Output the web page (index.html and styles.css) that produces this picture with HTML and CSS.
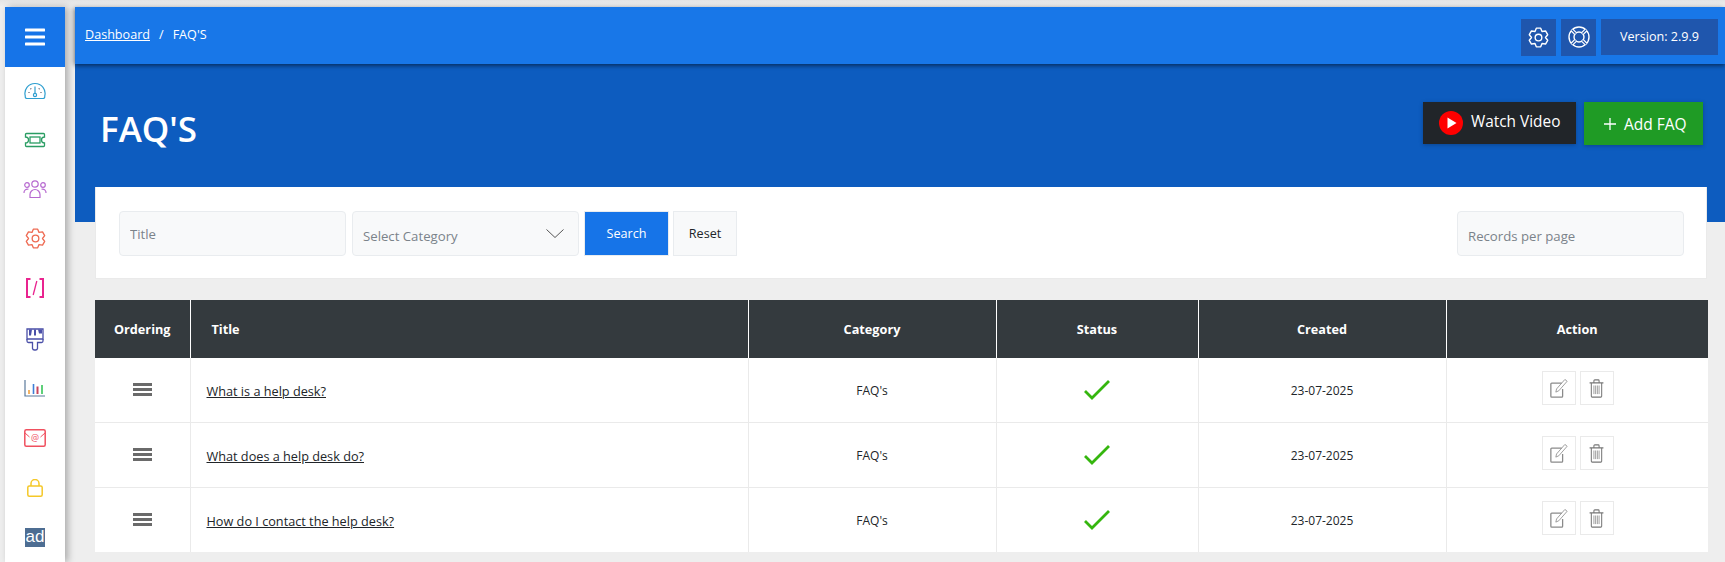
FILE: index.html
```html
<!DOCTYPE html>
<html lang="en">
<head>
<meta charset="utf-8">
<title>FAQ'S</title>
<link rel="stylesheet" href="styles.css">
</head>
<body>
<div class="shell">
  <aside class="sidebar">
    <div class="menu-toggle">
      <svg width="20" height="18" viewBox="0 0 20 18"><path d="M1 2h18M1 9h18M1 16h18" stroke="#fff" stroke-width="3" stroke-linecap="round"/></svg>
    </div>
    <nav class="side-nav">
      <a class="side-item"><svg width="22" height="18" viewBox="0 0 22 18" fill="none" stroke="#2f9fd0" stroke-width="1.2"><path d="M3 16.500h16a1.800 1.800 0 0 0 1.700-2.300A10 10 0 0 0 11 1.500 10 10 0 0 0 1.300 14.200 1.800 1.800 0 0 0 3 16.500z"/><circle cx="11" cy="13" r="1.600"/><path d="M11 11V4.500"/><path stroke="#445" d="M4.500 10.500h1M6.500 6.500l.7.7M15.500 6.500l-.7.7M16.500 10.500h1"/></svg></a>
      <a class="side-item"><svg width="22" height="16" viewBox="0 0 22 16" fill="none" stroke="#2a9d63" stroke-width="1.300"><path d="M2.500 1.500h17a1 1 0 0 1 1 1V5a3 3 0 0 0 0 6v2.500a1 1 0 0 1-1 1h-17a1 1 0 0 1-1-1V11a3 3 0 0 0 0-6V2.500a1 1 0 0 1 1-1z"/><rect x="6" y="5" width="10" height="6"/></svg></a>
      <a class="side-item nudge-2"><svg width="24" height="20" viewBox="0 0 24 20" fill="none" stroke="#b76ad0" stroke-width="1.200"><circle cx="12" cy="5" r="3.200"/><circle cx="4" cy="6" r="2.300"/><circle cx="20" cy="6" r="2.300"/><path d="M7 18.500v-3a5 5 0 0 1 10 0v3zM1 14a3.500 3.500 0 0 1 4.500-3.800M23 14a3.500 3.500 0 0 0-4.500-3.800"/></svg></a>
      <a class="side-item nudge-1"><svg width="21" height="21" viewBox="0 0 24 24" fill="none" stroke="#ee6a52" stroke-width="1.500" stroke-linejoin="round"><circle cx="12" cy="12" r="3.800"/><path d="M9.500 1.300H14.500L16 5.070 20.040 4.500 22.500 8.800 20 12 22.500 15.200 20.040 19.500 16 18.930 14.500 22.700H9.500L8 18.930 3.960 19.500 1.500 15.200 4 12 1.500 8.800 3.960 4.500 8 5.070z"/></svg></a>
      <a class="side-item nudge-1"><svg width="20" height="20" viewBox="0 0 20 20" fill="none" stroke="#e9248f" stroke-width="2"><path d="M5.500 1H2v18h3.500M14.500 1H18v18h-3.500"/><path stroke-width="1.300" d="M11.800 3l-3.600 14"/></svg></a>
      <a class="side-item"><svg width="18" height="23" viewBox="0 0 18 23" fill="none" stroke="#4a4fa8" stroke-width="1.300"><path d="M1 1h16v10H1z"/><path d="M1 11v2a1.500 1.500 0 0 0 1.500 1.500H6.500v6a2 2 0 0 0 2 1.500h1a2 2 0 0 0 2-1.500v-6h4A1.500 1.500 0 0 0 17 13v-2"/><path fill="#4a4fa8" stroke="none" d="M3 1.500h3L5 7.500H3zM8 1.500h2v6H8zM12 1.500h4v4h-3z"/></svg></a>
      <a class="side-item"><svg width="22" height="17" viewBox="0 0 22 17" fill="none"><path d="M1 0v16h20" stroke="#5b7a9c" stroke-width="1.200"/><path d="M5 10v4" stroke="#f2a13c" stroke-width="1.600"/><path d="M9.500 4v10" stroke="#3f7fd6" stroke-width="1.600"/><path d="M13.500 6.500V14" stroke="#c8455c" stroke-width="2"/><path d="M18 5v9" stroke="#5fd07a" stroke-width="2"/></svg></a>
      <a class="side-item"><svg width="22" height="18" viewBox="0 0 22 18" fill="none" stroke="#f0505f" stroke-width="1.500"><rect x=".8" y=".8" width="20.400" height="16.400" rx="1.500"/><path d="M1 4l4.500 4M21 4l-4.500 4" stroke-width="1"/><text class="mail-at" x="11" y="12">@</text></svg></a>
      <a class="side-item"><svg width="16" height="18" viewBox="0 0 16 18" fill="none" stroke="#f5c828" stroke-width="1.500"><rect x=".8" y="7" width="14.400" height="10.200" rx="1.500"/><path d="M4 7V4.500a4 4 0 0 1 8 0V7"/></svg></a>
      <a class="side-item"><span class="ad-logo">ad</span></a>
    </nav>
  </aside>

  <main class="main">
    <header class="topbar">
      <div class="crumbs"><a class="crumb-link" href="#">Dashboard</a><span class="crumb-sep">/</span><span>FAQ'S</span></div>
      <div class="top-actions">
        <span class="top-btn"><svg width="21" height="21" viewBox="0 0 24 24" fill="none" stroke="#fff" stroke-width="1.600" stroke-linejoin="round"><circle cx="12" cy="12" r="3.800"/><path d="M9.500 1.300H14.500L16 5.070 20.040 4.500 22.500 8.800 20 12 22.500 15.200 20.040 19.500 16 18.930 14.500 22.700H9.500L8 18.930 3.960 19.500 1.500 15.200 4 12 1.500 8.800 3.960 4.500 8 5.070z"/></svg></span>
        <span class="top-btn"><svg width="22" height="22" viewBox="0 0 22 22" fill="none" stroke="#fff" stroke-width="1.400"><circle cx="11" cy="11" r="10"/><circle cx="11" cy="11" r="5"/><path d="M3.900 3.900l3.600 3.600M18.100 3.900l-3.600 3.600M3.900 18.100l3.600-3.600M18.100 18.100l-3.600-3.600" stroke-width="3.600"/><path d="M3.900 3.900l3.600 3.600M18.100 3.900l-3.600 3.600M3.900 18.100l3.600-3.600M18.100 18.100l-3.600-3.600" stroke="#1f56ad" stroke-width="1.200"/></svg></span>
        <span class="version">Version: 2.9.9</span>
      </div>
    </header>

    <section class="hero">
      <h1 class="hero-title">FAQ'S</h1>
      <div class="hero-actions">
        <a class="btn-video"><svg width="24" height="24" viewBox="0 0 24 24"><circle cx="12" cy="12" r="12" fill="#f00"/><path d="M8.500 6.500v11l9-5.500z" fill="#fff"/></svg>Watch Video</a>
        <a class="btn-add"><svg width="12" height="12" viewBox="0 0 12 12"><path d="M6 0v12M0 6h12" stroke="#fff" stroke-width="1.300"/></svg>Add FAQ</a>
      </div>
    </section>

    <section class="filters">
      <input class="field field-title" type="text" placeholder="Title">
      <div class="select-wrap">
        <select class="field field-select"><option>Select Category</option></select>
        <svg class="chevron" width="18" height="9" viewBox="0 0 18 9" fill="none"><path d="M.5.500 9 8.500 17.500.500" stroke="#555" stroke-width="1"/></svg>
      </div>
      <button class="btn-search" type="button">Search</button>
      <button class="btn-reset" type="button">Reset</button>
      <input class="field field-records" type="text" placeholder="Records per page">
    </section>

    <table class="grid">
      <colgroup>
        <col class="c-order"><col class="c-title"><col class="c-cat"><col class="c-status"><col class="c-created"><col class="c-action">
      </colgroup>
      <thead>
        <tr><th>Ordering</th><th class="left">Title</th><th>Category</th><th>Status</th><th>Created</th><th>Action</th></tr>
      </thead>
      <tbody>
        <tr>
          <td><span class="drag"></span></td>
          <td class="left"><a class="row-link" href="#">What is a help desk?</a></td>
          <td class="txt">FAQ's</td>
          <td><svg class="check" width="26" height="20" viewBox="0 0 26 20" fill="none"><path d="M1 11l7 7L25 1" stroke="#35b60e" stroke-width="2.800"/></svg></td>
          <td class="txt">23-07-2025</td>
          <td><div class="acts">
            <span class="act"><svg width="20" height="19" viewBox="0 1 20 21" fill="none" stroke="#8a8a8a"><path d="M13 5.500H2a1 1 0 0 0-1 1V20a1 1 0 0 0 1 1h11a1 1 0 0 0 1-1v-8" stroke-width="1.400"/><path d="M6.500 15.500l.8-3.500L16.500 1.500 19 3.500 9.800 14z" stroke-width=".9"/></svg></span>
            <span class="act"><svg width="17" height="19" viewBox="0 0 18 22" fill="none" stroke="#777"><path d="M1 4.500h16M6 4V2a1 1 0 0 1 1-1h4a1 1 0 0 1 1 1v2" stroke-width="1.200"/><path d="M3 4.500V20a1 1 0 0 0 1 1h10a1 1 0 0 0 1-1V4.500" stroke-width="1.200"/><path d="M6 7.500v10M8 7.500v10M10 7.500v10M12 7.500v10" stroke-width=".8"/></svg></span>
          </div></td>
        </tr>
        <tr>
          <td><span class="drag"></span></td>
          <td class="left"><a class="row-link" href="#">What does a help desk do?</a></td>
          <td class="txt">FAQ's</td>
          <td><svg class="check" width="26" height="20" viewBox="0 0 26 20" fill="none"><path d="M1 11l7 7L25 1" stroke="#35b60e" stroke-width="2.800"/></svg></td>
          <td class="txt">23-07-2025</td>
          <td><div class="acts">
            <span class="act"><svg width="20" height="19" viewBox="0 1 20 21" fill="none" stroke="#8a8a8a"><path d="M13 5.500H2a1 1 0 0 0-1 1V20a1 1 0 0 0 1 1h11a1 1 0 0 0 1-1v-8" stroke-width="1.400"/><path d="M6.500 15.500l.8-3.500L16.500 1.500 19 3.500 9.800 14z" stroke-width=".9"/></svg></span>
            <span class="act"><svg width="17" height="19" viewBox="0 0 18 22" fill="none" stroke="#777"><path d="M1 4.500h16M6 4V2a1 1 0 0 1 1-1h4a1 1 0 0 1 1 1v2" stroke-width="1.200"/><path d="M3 4.500V20a1 1 0 0 0 1 1h10a1 1 0 0 0 1-1V4.500" stroke-width="1.200"/><path d="M6 7.500v10M8 7.500v10M10 7.500v10M12 7.500v10" stroke-width=".8"/></svg></span>
          </div></td>
        </tr>
        <tr>
          <td><span class="drag"></span></td>
          <td class="left"><a class="row-link" href="#">How do I contact the help desk?</a></td>
          <td class="txt">FAQ's</td>
          <td><svg class="check" width="26" height="20" viewBox="0 0 26 20" fill="none"><path d="M1 11l7 7L25 1" stroke="#35b60e" stroke-width="2.800"/></svg></td>
          <td class="txt">23-07-2025</td>
          <td><div class="acts">
            <span class="act"><svg width="20" height="19" viewBox="0 1 20 21" fill="none" stroke="#8a8a8a"><path d="M13 5.500H2a1 1 0 0 0-1 1V20a1 1 0 0 0 1 1h11a1 1 0 0 0 1-1v-8" stroke-width="1.400"/><path d="M6.500 15.500l.8-3.500L16.500 1.500 19 3.500 9.800 14z" stroke-width=".9"/></svg></span>
            <span class="act"><svg width="17" height="19" viewBox="0 0 18 22" fill="none" stroke="#777"><path d="M1 4.500h16M6 4V2a1 1 0 0 1 1-1h4a1 1 0 0 1 1 1v2" stroke-width="1.200"/><path d="M3 4.500V20a1 1 0 0 0 1 1h10a1 1 0 0 0 1-1V4.500" stroke-width="1.200"/><path d="M6 7.500v10M8 7.500v10M10 7.500v10M12 7.500v10" stroke-width=".8"/></svg></span>
          </div></td>
        </tr>
      </tbody>
    </table>
  </main>
</div>
</body>
</html>
```

FILE: styles.css
```css
* { box-sizing: border-box; }
html, body { margin: 0; height: 100%; overflow: hidden; }
body {
  background: #eee;
  font-family: "Open Sans", "Noto Sans", sans-serif;
  font-size: 12px;
  color: #212529;
}
.shell {
  display: flex;
  height: 562px;
  padding-top: 7px;
  background: linear-gradient(#e4e4e4, #f0f0f0 7px, #eee 8px);
}
.sidebar {
  flex: 0 0 60px;
  margin-left: 5px;
  background: #fff;
  box-shadow: 3px 0 7px rgba(0, 0, 0, .28);
  position: relative;
  z-index: 3;
}
.menu-toggle {
  height: 60px;
  background: #1674e8;
  display: flex;
  align-items: center;
  justify-content: center;
}
.side-nav { display: flex; flex-direction: column; margin-top: -1px; }
.side-item {
  height: 49.67px;
  display: flex;
  align-items: center;
  justify-content: center;
}
.nudge-2 svg { margin-bottom: 3px; }
.nudge-1 svg { margin-bottom: 2px; }
.mail-at {
  font: 9px "Open Sans", sans-serif;
  text-anchor: middle;
  fill: #f0505f;
  stroke: none;
}
.ad-logo {
  width: 20px;
  height: 19px;
  background: #4d6d92;
  color: #fff;
  font: 400 17px/17px "Liberation Sans", sans-serif;
  text-align: center;
}
.main {
  flex: 1;
  margin-left: 10px;
  min-width: 0;
  display: flex;
  flex-direction: column;
}
.topbar {
  height: 57px;
  flex: none;
  background: #1877e8;
  box-shadow: 0 2px 4px rgba(0, 0, 0, .4), -2px 0 5px rgba(0, 0, 0, .2);
  color: #fff;
  font-size: 12.6px;
  display: flex;
  align-items: center;
  justify-content: space-between;
  padding: 0 7px 3px 10px;
  position: relative;
  z-index: 2;
}
.crumbs { display: flex; align-items: center; }
.crumb-link { color: #fff; }
.crumb-sep { margin: 0 9px; }
.top-actions { display: flex; gap: 5px; align-items: flex-start; padding-top: 6px; }
.top-btn {
  width: 35px;
  height: 37px;
  background: #1f56ad;
  display: flex;
  align-items: center;
  justify-content: center;
}
.version {
  width: 117px;
  height: 36px;
  background: #1f56ad;
  display: flex;
  align-items: center;
  justify-content: center;
  font-size: 12.6px;
}
.hero {
  height: 158px;
  flex: none;
  background: #0d5cbf;
  display: flex;
  justify-content: space-between;
  padding: 40px 22px 0 25px;
}
.hero-title {
  margin: 0;
  color: #fff;
  font-size: 35px;
  font-weight: 600;
  line-height: 50px;
}
.hero-actions { display: flex; gap: 8px; align-items: flex-start; margin-top: -2px; }
.btn-video {
  width: 153px;
  height: 42px;
  background: #212529;
  color: #fff;
  font-size: 15.4px;
  display: flex;
  align-items: center;
  gap: 8px;
  padding: 0 0 4px 16px;
  box-shadow: 0 1px 4px rgba(0, 0, 0, .25);
}
.btn-video svg { margin-top: 4px; }
.btn-add {
  width: 119px;
  height: 43px;
  background: #1f9b25;
  color: #fff;
  font-size: 15.5px;
  display: flex;
  align-items: center;
  gap: 8px;
  padding-left: 20px;
  box-shadow: 0 1px 4px rgba(0, 0, 0, .25);
}
.filters {
  margin: -35px 18px 0 20px;
  height: 92px;
  flex: none;
  background: #fff;
  border: 1px solid #eaeaea;
  border-top: 0;
  display: flex;
  align-items: center;
  padding: 2px 22px 0 23px;
  position: relative;
  z-index: 1;
}
.field {
  height: 45px;
  width: 227px;
  background: #f8f9fa;
  border: 1px solid #e9ecef;
  border-radius: 4px;
  font: 13.2px "Open Sans", sans-serif;
  color: #7b838a;
  outline: 0;
}
.field::placeholder { color: #7b838a; opacity: 1; }
.field-title { padding: 0 10px; }
.select-wrap { position: relative; margin-left: 6px; }
.field-select {
  appearance: none;
  display: block;
  padding: 5px 10px 0;
}
.chevron { position: absolute; right: 15px; top: 18px; }
.btn-search, .btn-reset {
  height: 45px;
  font: 12.6px "Open Sans", sans-serif;
  border: 1px solid #e9ecef;
}
.btn-search { width: 85px; margin-left: 5px; background: #1674e8; color: #fff; }
.btn-reset { width: 64px; margin-left: 4px; background: #f8f9fa; color: #212529; }
.field-records { margin-left: auto; padding: 5px 10px 0; }
.grid {
  margin: 21px 17px 0 20px;
  width: 1613px;
  flex: none;
  table-layout: fixed;
  border-collapse: collapse;
  background: #fff;
}
.c-order { width: 95px; }
.c-title { width: 558px; }
.c-cat { width: 248px; }
.c-status { width: 202px; }
.c-created { width: 248px; }
.c-action { width: 262px; }
.grid th {
  height: 58px;
  background: #343a3e;
  color: #fff;
  font-size: 12.7px;
  font-weight: 700;
  text-align: center;
  padding: 0 10px;
  border-left: 1px solid #fff;
}
.grid th:first-child { border-left: 0; }
.grid th.left { text-align: left; padding-left: 21px; }
.grid td {
  height: 65px;
  text-align: center;
  padding: 0 10px;
  border: 1px solid #eaeaea;
  border-top: 0;
  font-size: 12px;
}
.grid tbody tr:first-child td { height: 64px; }
.grid td:first-child { border-left: 0; }
.grid td:last-child { border-right: 0; }
.grid tbody tr:last-child td { border-bottom: 0; }
.grid td.txt { padding-top: 2px; }
.grid td.left { text-align: left; padding: 2px 10px 0 16px; font-size: 12.7px; }
.row-link { color: #212529; }
.drag {
  display: block;
  width: 19px;
  height: 13px;
  margin: 0 auto;
  border-top: 3px solid #6a6a6a;
  border-bottom: 3px solid #6a6a6a;
  position: relative;
}
.drag::after {
  content: "";
  position: absolute;
  left: 0;
  right: 0;
  top: 2px;
  height: 3px;
  background: #6a6a6a;
}
.check { display: block; margin: 0 auto; }
.acts { display: flex; justify-content: center; gap: 4px; margin: -3px 0 0 1px; }
.act {
  width: 34px;
  height: 34px;
  border: 1px solid #eaeaea;
  display: flex;
  align-items: center;
  justify-content: center;
}
```
